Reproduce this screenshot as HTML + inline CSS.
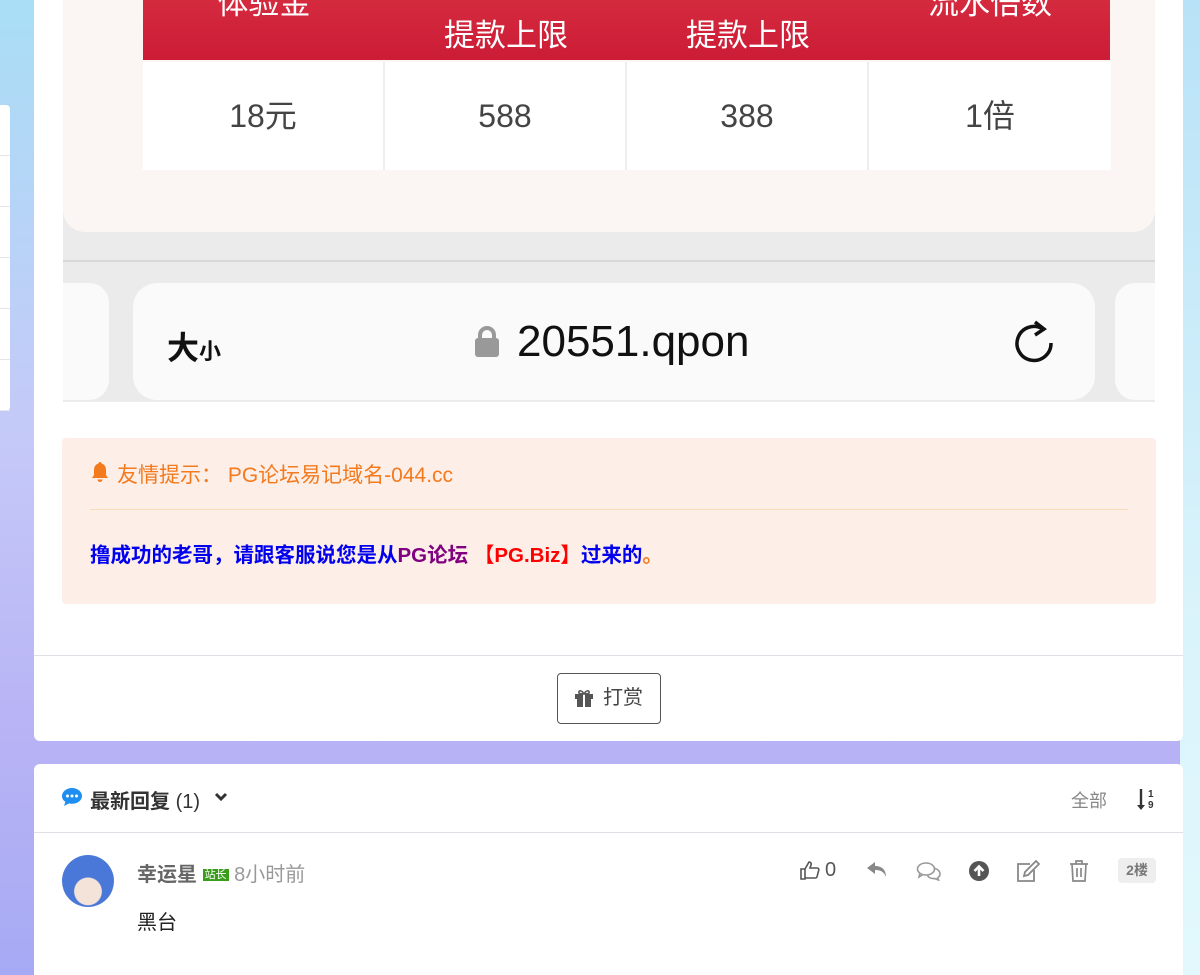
<!DOCTYPE html><html><head><meta charset="utf-8"><style>
*{margin:0;padding:0;box-sizing:border-box}
html,body{width:1200px;height:975px;overflow:hidden}
body{position:relative;font-family:"Liberation Sans","Noto Sans CJK SC",sans-serif;background:linear-gradient(180deg,#a9def6 0%,#c5c9f8 45%,#b8b3f5 75%,#a6aaf4 100%)}
.rbg{position:absolute;right:0;top:0;width:20px;height:975px;background:linear-gradient(180deg,#b8e2f7,#d9f3fb 60%,#e2f8fc)}
.lp{position:absolute;left:0;top:105px;width:10px;height:306px;background:#fff;border-radius:0 4px 4px 0}
.lp i{display:block;height:51px;border-bottom:1px solid #e6e6e6}
.card{position:absolute;left:34px;width:1149px;background:#fff;border-radius:6px;overflow:hidden}
.img{position:absolute;left:29px;top:0;width:1092px;height:402px;background:#ebebeb;overflow:hidden}
.t{position:absolute;left:0;top:-10px;width:1092px;height:242px;background:#fbf6f4;border-radius:0 0 22px 22px}
.hd{position:absolute;left:80px;top:0;width:967px;height:60px;background:linear-gradient(#d42a3e,#cc1c36);color:#fff;font-size:31px}
.hd span,.row span{position:absolute;width:242px;text-align:center}
.row{position:absolute;left:80px;top:62px;width:967px;height:108px;font-size:32px;color:#444}
.row span{top:0;height:108px;line-height:108px;background:#fff;border-right:2px solid #eee}
.url{position:absolute;left:70px;top:283px;width:962px;height:117px;background:#fafafa;border-radius:24px}
.notice{position:absolute;left:28px;width:1094px;height:166px;background:#fdeee8;border-radius:4px}
.ic{position:absolute}
</style></head><body>
<div class="rbg"></div>
<div class="lp"><i></i><i></i><i></i><i></i><i></i><i></i></div>
<div class="card" style="top:-10px;height:751px">
 <div class="img" style="top:10px">
  <div class="t"></div>
  <div class="hd"><span style="left:0;top:-22px">体验金</span><span style="left:242px;top:10px">提款上限</span><span style="left:484px;top:10px">提款上限</span><span style="left:726px;top:-22px">流水倍数</span></div>
  <div class="row"><span style="left:0">18元</span><span style="left:242px">588</span><span style="left:484px">388</span><span style="left:726px;border:0">1倍</span></div>
  <div style="position:absolute;left:0;top:260px;width:1092px;height:2px;background:#d8d8d8"></div>
  <div style="position:absolute;left:-20px;top:283px;width:66px;height:117px;background:#fafafa;border-radius:20px"></div>
  <div style="position:absolute;left:1052px;top:283px;width:66px;height:117px;background:#fafafa;border-radius:20px"></div>
  <div class="url">
   <div style="position:absolute;left:34px;top:40px;font-size:32px;color:#111;font-weight:bold">大<span style="font-size:22px">小</span></div>
   <div style="position:absolute;left:345px;top:43px;width:18px;height:18px;border:4px solid #999;border-bottom:0;border-radius:9px 9px 0 0"></div>
   <div style="position:absolute;left:342px;top:55px;width:24px;height:19px;background:#999;border-radius:3px"></div>
   <div style="position:absolute;left:384px;top:34px;font-size:44px;color:#111">20551.qpon</div>
   <svg style="position:absolute;left:880px;top:36px" width="44" height="46" viewBox="0 0 44 46"><path d="M30 10 A17 17 0 1 0 38 24" fill="none" stroke="#111" stroke-width="3.5"/><path d="M22 3 L31 10 L22 16" fill="none" stroke="#111" stroke-width="3.5"/></svg>
  </div>
 </div>
 <div class="notice" style="top:448px">
  <svg class="ic" style="left:28px;top:23px" width="20" height="22" viewBox="0 0 20 22"><path d="M10 1c-1 0-1.5.7-1.5 1.5C5.5 3.3 4 5.8 4 9v5l-2 3h16l-2-3V9c0-3.2-1.5-5.7-4.5-6.5C11.5 1.7 11 1 10 1zM7.5 18.5a2.5 2.5 0 0 0 5 0z" fill="#f47a1e"/></svg>
  <div style="position:absolute;left:55px;top:21px;font-size:21px;color:#f47a1e">友情提示： PG论坛易记域名-044.cc</div>
  <div style="position:absolute;left:28px;top:71px;width:1038px;height:1px;background:#f8dcbc"></div>
  <div style="position:absolute;left:28px;top:100px;font-size:20.5px;font-weight:bold;color:#0000ee">撸成功的老哥，请跟客服说您是从<span style="color:#800080">PG论坛 </span><span style="color:#f00">【PG.Biz】</span>过来的<span style="color:#f47a1e">。</span></div>
 </div>
 <div style="position:absolute;left:0;top:665px;width:1149px;height:1px;background:#dde1e5"></div>
 <div style="position:absolute;left:523px;top:683px;width:104px;height:51px;border:1px solid #555;border-radius:4px;font-size:20px;color:#444;line-height:49px;padding-left:45px">打赏</div>
 <svg class="ic" style="left:540px;top:699px" width="20" height="19" viewBox="0 0 20 19"><rect x="1" y="5" width="18" height="5" fill="#555"/><rect x="3" y="10" width="14" height="8" fill="#555"/><rect x="9" y="5" width="2" height="13" fill="#fff"/><path d="M10 5C8 1 4 1 5 4c.5 1 3 1 5 1zM10 5c2-4 6-4 5-1-.5 1-3 1-5 1z" fill="none" stroke="#555" stroke-width="1.6"/></svg>
</div>
<div class="card" style="top:764px;height:211px;border-radius:6px 6px 0 0">
 <svg class="ic" style="left:27px;top:22px" width="22" height="22" viewBox="0 0 22 22"><path d="M11 2C5 2 1 6 1 10c0 2.5 1.3 4.5 3.4 5.8L3 20l5-2.6c1 .3 2 .4 3 .4 6 0 10-3.8 10-7.8S17 2 11 2z" fill="#1e8ff0"/><circle cx="6.5" cy="10" r="1.5" fill="#fff"/><circle cx="11" cy="10" r="1.5" fill="#fff"/><circle cx="15.5" cy="10" r="1.5" fill="#fff"/></svg>
 <div style="position:absolute;left:56px;top:21px;font-size:20px;font-weight:bold;color:#333">最新回复 <span style="font-weight:normal">(1)</span></div>
 <svg class="ic" style="left:180px;top:28px" width="14" height="10" viewBox="0 0 14 10"><path d="M2 2l5 5 5-5" fill="none" stroke="#333" stroke-width="3"/></svg>
 <div style="position:absolute;left:1037px;top:23px;font-size:18px;color:#888">全部</div>
 <svg class="ic" style="left:1103px;top:24px" width="20" height="24" viewBox="0 0 20 24"><path d="M4 1v19" stroke="#333" stroke-width="2.4"/><path d="M0 17l4 5 4-5z" fill="#333"/><text x="11" y="9" font-size="10" font-weight="bold" fill="#333" font-family="Liberation Sans">1</text><text x="11" y="20" font-size="10" font-weight="bold" fill="#333" font-family="Liberation Sans">9</text></svg>
 <div style="position:absolute;left:0;top:68px;width:1149px;height:1px;background:#dde1e5"></div>
 <div style="position:absolute;left:28px;top:91px;width:52px;height:52px;border-radius:50%;background:radial-gradient(circle at 50% 70%,#f3e3d8 0 30%,#4a78d8 32%)"></div>
 <div style="position:absolute;left:103px;top:94px;font-size:20px;color:#666"><b>幸运星</b> <span style="font-size:11px;background:#3a9d1a;color:#fff;padding:0 2px;vertical-align:3px">站长</span> <span style="color:#999">8小时前</span></div>
 <div style="position:absolute;left:103px;top:142px;font-size:20px;color:#222">黑台</div>
 <svg class="ic" style="left:766px;top:96px" width="20" height="20" viewBox="0 0 20 20"><path d="M1 9h4v10H1zM5 9l4-7c2 0 2.5 1.5 2 3l-1 3h7c1.5 0 2 1 1.7 2.3l-1.7 6.5c-.3 1-1 1.2-2 1.2H5" fill="none" stroke="#555" stroke-width="1.6"/></svg>
 <div style="position:absolute;left:791px;top:95px;font-size:20px;color:#555">0</div>
 <svg class="ic" style="left:832px;top:97px" width="22" height="18" viewBox="0 0 22 18"><path d="M9 1L1 7l8 6V9c6 0 9 2 11 7 0-6-3-11-11-11z" fill="#888"/></svg>
 <svg class="ic" style="left:882px;top:97px" width="26" height="20" viewBox="0 0 26 20"><ellipse cx="10" cy="8" rx="8.5" ry="6" fill="none" stroke="#999" stroke-width="1.6"/><path d="M4 12l-1 4 4-2.5" fill="none" stroke="#999" stroke-width="1.6"/><path d="M18 7c3 1 6 3 6 6 0 2-1 3-2.5 4l1 2-4-1.5c-3 .5-6-1-7-3" fill="none" stroke="#999" stroke-width="1.6"/></svg>
 <svg class="ic" style="left:935px;top:97px" width="20" height="20" viewBox="0 0 20 20"><circle cx="10" cy="10" r="10" fill="#555"/><path d="M10 15V6M5.5 10L10 5.5 14.5 10" fill="none" stroke="#fff" stroke-width="2.6"/></svg>
 <svg class="ic" style="left:982px;top:96px" width="25" height="22" viewBox="0 0 25 22"><path d="M14 4H2v17h16V10" fill="none" stroke="#888" stroke-width="1.8"/><path d="M20 1l3 3-11 11-4 1 1-4z" fill="none" stroke="#888" stroke-width="1.8"/></svg>
 <svg class="ic" style="left:1036px;top:96px" width="18" height="22" viewBox="0 0 18 22"><path d="M0 4h18M6 4V1h6v3M2 4l1 17h12l1-17M7 8v9M11 8v9" fill="none" stroke="#888" stroke-width="1.7"/></svg>
 <div style="position:absolute;left:1084px;top:94px;width:38px;height:25px;background:#eee;border-radius:4px;font-size:14px;color:#777;font-weight:bold;text-align:center;line-height:25px">2楼</div>
</div>
</body></html>
